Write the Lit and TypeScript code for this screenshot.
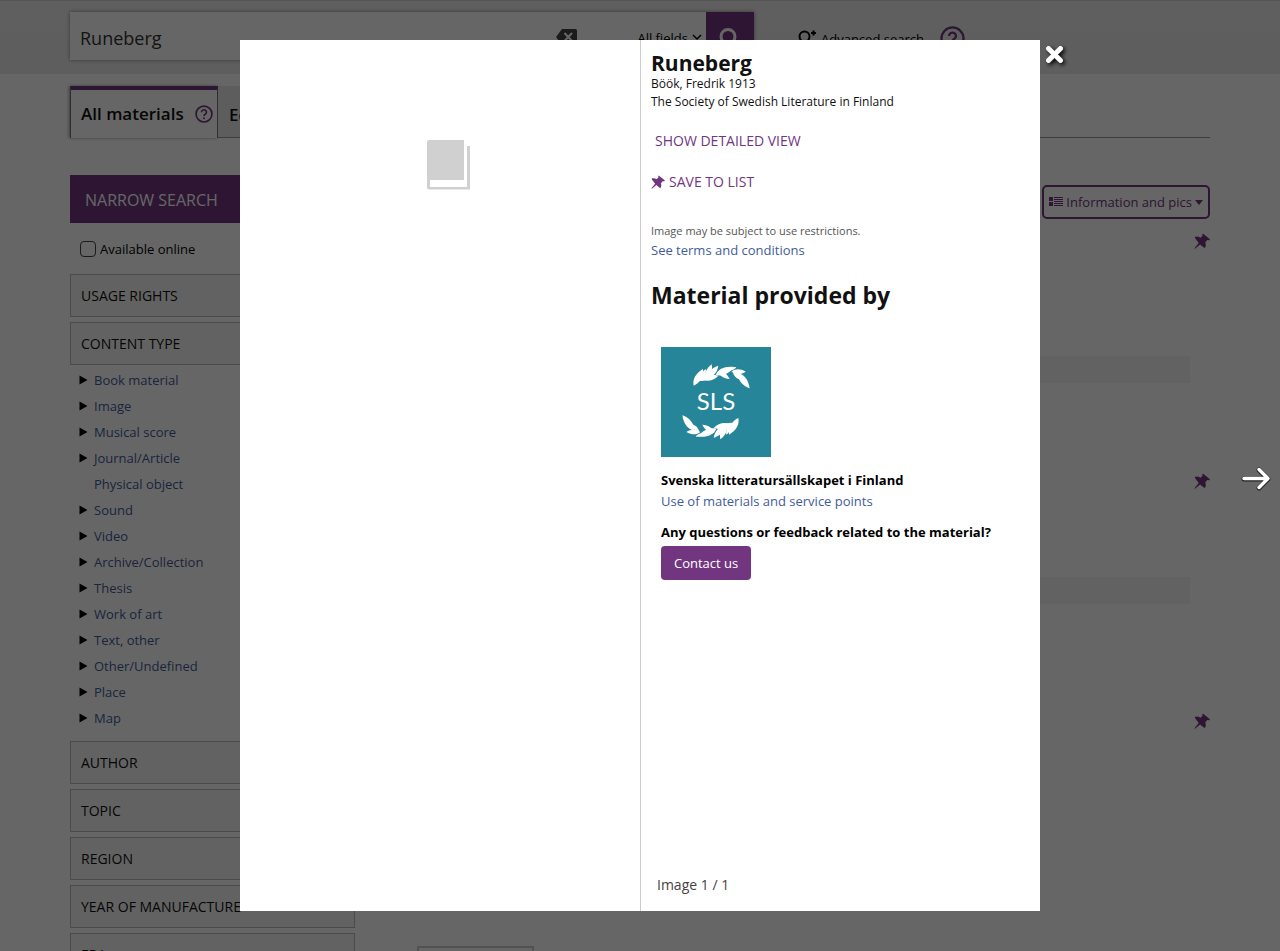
import { LitElement, html, css, svg } from "lit";
import { customElement } from "lit/decorators.js";

const timesPath = "M242.72 256l100.07-100.07c12.28-12.28 12.28-32.19 0-44.48l-22.24-22.24c-12.28-12.28-32.19-12.28-44.48 0L176 189.28 75.93 89.21c-12.28-12.28-32.19-12.28-44.48 0L9.21 111.45c-12.28 12.28-12.28 32.19 0 44.48L109.28 256 9.21 356.07c-12.28 12.28-12.28 32.19 0 44.48l22.24 22.24c12.28 12.28 32.2 12.28 44.48 0L176 322.72l100.07 100.07c12.28 12.28 32.2 12.28 44.48 0l22.24-22.24c12.28-12.28 12.28-32.19 0-44.48L242.72 256z";

const pin = (size: number) => html`<svg width=${size} height=${size} viewBox="0 0 16 16" aria-hidden="true">
  <path fill="currentColor" d="M8.300 1Q8.800 0.300 9.500 1L15.600 6Q16.200 7 15 7.200L13.300 7.100L11.200 9.600Q12.400 12 11.200 14.400Q10.600 15 9.800 14.600L6.100 11.400L1 15.700L0.500 15.200L4.700 10L1 5Q0.500 4 1.500 3.700Q3.800 3.200 6.600 4.700L8.500 2.800Z"></path></svg>`;

const help = (size: number) => html`<svg width=${size} height=${size} viewBox="0 0 24 24" fill="none" stroke="currentColor" aria-hidden="true">
  <circle cx="12" cy="12" r="10.6" stroke-width="2.200"></circle>
  <path d="M8.700 9.600a3.300 3.200 0 1 1 5 2.700c-1.100.7-1.700 1.200-1.700 2.500" stroke-width="2.200"></path>
  <circle cx="12" cy="17.700" r="1.300" fill="currentColor" stroke="none"></circle></svg>`;

// Leaves of one laurel branch: base x, base y, tip x, tip y.
const leaves = [
  [98, 116, 126, 66], [108, 100, 150, 86], [120, 98, 134, 66], [134, 96, 152, 52], [138, 94, 172, 56], [124, 98, 172, 86],
  [164, 84, 218, 60], [170, 72, 206, 96], [168, 78, 196, 66], [212, 74, 254, 74], [204, 70, 226, 60], [216, 76, 240, 98], [230, 78, 266, 124],
];
const branch = () => leaves.map(([x, y, tx, ty]) => {
  const length = Math.hypot(tx - x, ty - y) / 12;
  const angle = (Math.atan2(ty - y, tx - x) * 180) / Math.PI;
  return svg`<path transform="translate(${x} ${y}) rotate(${angle}) scale(${length})" d="M0 0C3-2.600 7-2.800 12 0C8 2.800 3 2.400 0 0Z"></path>`;
});

const types = [
  "Book material", "Image", "Musical score", "Journal/Article", "Physical object", "Sound", "Video",
  "Archive/Collection", "Thesis", "Work of art", "Text, other", "Other/Undefined", "Place", "Map",
];

@customElement("app-root")
export class AppRoot extends LitElement {
  static styles = css`
    :host { display: block; height: 100vh; overflow: hidden; background: #fff; color: #000;
      font: 14px/20px "Open Sans", "Noto Sans", sans-serif; }
    * { box-sizing: border-box; }
    h1, h2, p, ul { margin: 0; padding: 0; }
    ul { list-style: none; }
    a { color: #3f5c99; text-decoration: none; }
    button { font: inherit; color: inherit; background: none; border: 0; padding: 0; margin: 0; }
    svg { display: block; flex: none; }
    .container { max-width: 1170px; margin: 0 auto; padding: 0 15px; }

    header { background: linear-gradient(#eee, #ebebeb); border-top: 1px solid #d8d8d8; height: 74px; padding-top: 11px; }
    .bar { display: flex; align-items: center; }
    .search { display: flex; align-items: center; width: 684px; height: 48px; background: #fff; box-shadow: 0 0 4px #888; }
    .query { flex: 1; min-width: 0; height: 48px; border: 0; padding: 3px 10px 0; font: 18px/24px "Open Sans", sans-serif; color: #333; background: none; }
    .clear { color: #444; margin: 2px 60px 0 0; }
    .scope { display: flex; align-items: center; gap: 4px; margin: 4px 4px 0 0; font-size: 13px; }
    .go { width: 48px; height: 48px; background: #723680; color: #fff; display: flex; justify-content: center; align-items: center; padding-top: 4px; }
    .advanced { display: flex; align-items: center; gap: 3px; color: #000; margin: 6px 16px 0 44px; font-size: 13px; }
    .purple { color: #723680; }
    .help { margin-top: 4px; }

    .tabs { display: flex; margin-top: 12px; border-bottom: 1px solid #999; height: 52px; }
    .tab { display: flex; align-items: center; font-size: 17px; line-height: 24px; font-weight: 600; color: #111; }
    .tab.on { width: 148px; justify-content: space-between; padding: 0 4px 0 10px; height: 52px; background: #fff; border: 1px solid #777;
      border-top: 4px solid #723680; border-bottom: 0; box-shadow: -1px 0 3px #999; }
    .tab.off { background: #e8e8e8; padding: 6px 11px 0; height: 51px; }

    .columns { display: flex; gap: 30px; margin-top: 37px; align-items: flex-start; }
    .side { width: 285px; flex: none; }
    .narrow { background: #723680; color: #fff; font-size: 16px; line-height: 48px; padding: 1px 15px 0; height: 48px; }
    .online { display: flex; align-items: center; gap: 4px; height: 51px; padding: 1px 10px 0; font-size: 13px; }
    .online input { appearance: none; width: 16px; height: 16px; margin: 0; border: 1px solid #444; border-radius: 4px; background: #fff; }
    .facet { display: flex; align-items: center; justify-content: space-between; width: 100%; height: 43px; margin-bottom: 5px; padding: 0 10px;
      background: #f5f5f5; border: 1px solid #bbb; font-weight: 500; color: #111; }
    .types { padding: 0 10px 10px 9px; margin-top: -3px; }
    .types li { display: flex; align-items: center; gap: 6px; height: 26px; font-size: 13px; }
    .results { flex: 1; min-width: 0; }
    .tools { display: flex; justify-content: flex-end; margin-top: 10px; }
    .view { display: flex; align-items: center; gap: 3px; height: 34px; border: 2px solid #723680; border-radius: 5px; padding: 0 5px; font-size: 13px; font-weight: 500; white-space: nowrap; }
    .hits { padding-top: 15px; }
    .hit { display: flex; align-items: flex-start; justify-content: space-between; height: 240px; }
    .strip { flex: 1; height: 27px; margin: 123px 4px 0 147px; background: #f5f5f5; }
    .hit.second .strip { margin-top: 104px; }
    .hit.third .strip { visibility: hidden; }
    .more { width: 117px; height: 36px; border: 2px solid #ccc; margin: -7px 0 0 32px; display: block; }

    .shade { position: fixed; inset: 0; background: rgba(0, 0, 0, .6); display: flex; justify-content: center; padding: 40px 0; }
    .dialog { width: 800px; max-width: 100%; background: #fff; display: flex; }
    .preview { width: 50%; display: flex; justify-content: center; padding: 100px 0 0 17px; }
    .info { width: 50%; border-left: 1px solid #ccc; display: flex; flex-direction: column; padding: 10px 10px 15px; }
    h1 { font-size: 21px; line-height: 26px; font-weight: 700; color: #111; }
    h2 { font-size: 23px; line-height: 30px; font-weight: 700; color: #111; margin-top: 20px; }
    .meta { font-size: 12px; line-height: 18px; color: #111; }
    .first { margin-top: -1px; }
    .action { display: flex; align-items: center; gap: 4px; color: #723680; font-weight: 500; line-height: 20px; align-self: flex-start; }
    .detail { margin: 20px 4px 21px; }
    .note { font-size: 11px; line-height: 18px; color: #555; margin-top: 30px; }
    .link { font-size: 13px; line-height: 20px; align-self: flex-start; }
    .provider { padding: 37px 10px 0; display: flex; flex-direction: column; align-items: flex-start; }
    .provider b { font-size: 13px; line-height: 20px; white-space: nowrap; }
    .name { margin: 13px 0 1px; }
    .question { margin-top: 11px; }
    .contact { background: #723680; color: #fff; border-radius: 4px; height: 34px; padding: 0 13px; margin-top: 4px; font-size: 13px; }
    .count { margin-top: auto; padding-left: 6px; line-height: 22px; color: #444; }
    .close { position: absolute; left: calc(50% + 406px); top: 46px; color: #fff; filter: drop-shadow(2px 2px 2px #000); }
    .next { position: absolute; right: 8px; top: calc(50% - 10px); }
  `;

  private facet(label: string) {
    return html`<button class="facet">${label}<svg width="10" height="8" viewBox="0 0 10 8"><path d="M1 1l4 4 4-4" fill="none" stroke="#222" stroke-width="2"></path></svg></button>`;
  }

  render() {
    return html`
      <header><div class="container bar">
        <form class="search" @submit=${(e: Event) => e.preventDefault()}>
          <input class="query" aria-label="Search" value="Runeberg">
          <button type="button" class="clear" aria-label="Clear"><svg width="21" height="16" viewBox="0 0 21 16"><path fill="currentColor" d="M6 0h13.500q1.500 0 1.500 1.500v13q0 1.500-1.500 1.500H6L0 8Z"></path><path d="M8.500 4l7.500 8M16 4l-7.500 8" stroke="#fff" stroke-width="2"></path></svg></button>
          <button type="button" class="scope">All fields<svg width="10" height="8" viewBox="0 0 10 8"><path d="M1 1l4 4 4-4" fill="none" stroke="#000" stroke-width="1.500"></path></svg></button>
          <button class="go" aria-label="Find"><svg width="22" height="22" viewBox="0 0 22 22" fill="none" stroke="currentColor" stroke-width="3"><circle cx="9" cy="9.500" r="7"></circle><path d="M14.500 14.500l6 6"></path></svg></button>
        </form>
        <a class="advanced" href="#"><svg width="20" height="20" viewBox="0 0 20 20" fill="none" stroke="currentColor" stroke-width="2"><circle cx="6.500" cy="7.500" r="5"></circle><path d="M10 11l6 6M13 4h5M15.500 1.500v5"></path></svg>Advanced search</a>
        <a class="purple help" href="#" aria-label="Help">${help(25)}</a>
      </div></header>
      <div class="container">
        <nav class="tabs">
          <a class="tab on" href="#">All materials <span class="purple">${help(18)}</span></a>
          <a class="tab off" href="#">Ed</a>
        </nav>
        <div class="columns">
          <aside class="side">
            <p class="narrow">NARROW SEARCH</p>
            <label class="online"><input type="checkbox">Available online</label>
            ${this.facet("USAGE RIGHTS")}${this.facet("CONTENT TYPE")}
            <ul class="types">${types.map((t) => html`<li>
              <svg width="9" height="10" viewBox="0 0 9 10">${t === "Physical object" ? "" : svg`<path d="M0.500 0.500l8 4.500-8 4.500z"></path>`}</svg>
              <a href="#">${t}</a></li>`)}</ul>
            ${["AUTHOR", "TOPIC", "REGION", "YEAR OF MANUFACTURE", "ERA"].map((f) => this.facet(f))}
          </aside>
          <main class="results">
            <div class="tools"><button class="view purple">
              <svg width="14" height="10" viewBox="0 0 14 10" fill="currentColor"><path d="M0 0h4v4H0zM0 5h4v4H0zM5 0h9v1H5zM5 2h9v1H5zM5 4h9v1H5zM5 6h9v1H5zM5 8h9v1H5z"></path></svg>
              Information and pics
              <svg width="8" height="5" viewBox="0 0 8 5"><path fill="currentColor" d="M0 0h8L4 5z"></path></svg></button></div>
            <div class="hits">${["first", "second", "third"].map((c) => html`<article class="hit ${c}">
              <div class="strip"></div><button class="purple" aria-label="Save">${pin(16)}</button></article>`)}
              <span class="more"></span></div>
          </main>
        </div>
      </div>
      <div class="shade">
        <section class="dialog" role="dialog" aria-label="Runeberg">
          <div class="preview"><svg width="44" height="50" viewBox="0 0 44 50" fill="#d0d0d0"><path d="M2 0H37V40H3V47H40V6H43V49.500H2Q0 49.500 0 47.500V2Q0 0 2 0Z"></path></svg></div>
          <div class="info">
            <h1>Runeberg</h1>
            <p class="meta first">Böök, Fredrik 1913</p>
            <p class="meta">The Society of Swedish Literature in Finland</p>
            <a class="action detail" href="#">SHOW DETAILED VIEW</a>
            <button class="action">${pin(14)}SAVE TO LIST</button>
            <p class="note">Image may be subject to use restrictions.</p>
            <a class="link" href="#">See terms and conditions</a>
            <h2>Material provided by</h2>
            <div class="provider">
              <svg width="110" height="110" viewBox="0 0 330 330" fill="#fff" role="img" aria-label="SLS">
                <rect width="330" height="330" fill="#278599"></rect>
                <g>${branch()}</g>
                <g transform="rotate(180 165 164.500)">${branch()}</g>
                <text x="165" y="190" text-anchor="middle" font-family="Lato, sans-serif" font-size="72">SLS</text>
              </svg>
              <b class="name">Svenska litteratursällskapet i Finland</b>
              <a class="link" href="#">Use of materials and service points</a>
              <b class="question">Any questions or feedback related to the material?</b>
              <button class="contact">Contact us</button>
            </div>
            <p class="count">Image 1 / 1</p>
          </div>
        </section>
        <button class="close" aria-label="Close"><svg width="17" height="17" viewBox="0 80 352 352"><path fill="currentColor" stroke="currentColor" stroke-width="14" d=${timesPath}></path></svg></button>
        <button class="next" aria-label="Next"><svg width="31" height="26" viewBox="0 0 31 26" fill="none" stroke-linecap="round" stroke-linejoin="round">
          <path d="M3 13H26M18 4L27 13L18 22" stroke="#222" stroke-width="5"></path><path d="M3 12.500H26M18 3.500L27 12.500L18 21.500" stroke="#fff" stroke-width="3.500"></path></svg></button>
      </div>`;
  }
}
